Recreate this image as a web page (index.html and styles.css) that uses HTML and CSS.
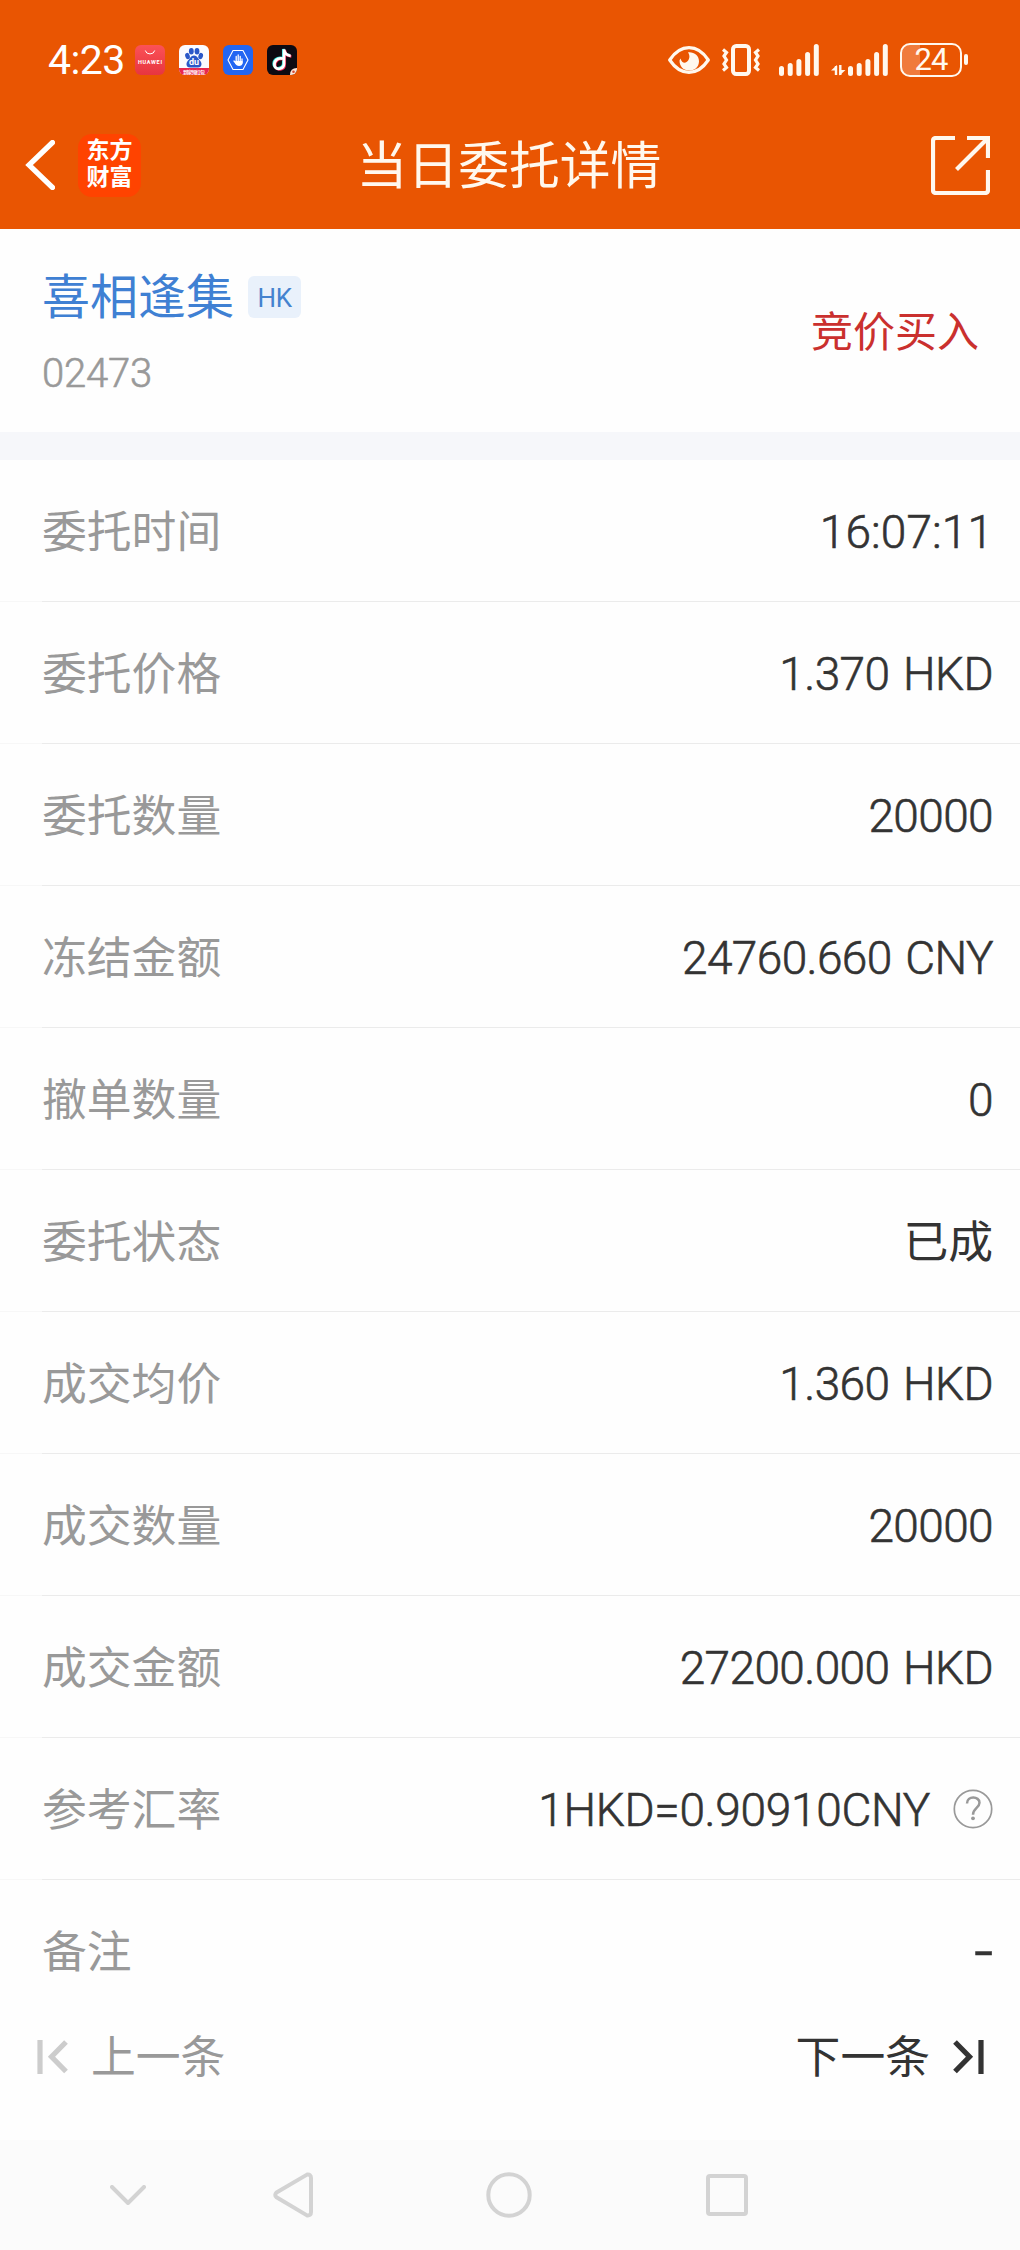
FILE: index.html
```html
<!DOCTYPE html>
<html lang="zh-CN">
<head>
<meta charset="utf-8">
<title>当日委托详情</title>
<link rel="stylesheet" href="styles.css">
</head>
<body>
<header class="header">
  <div class="status">
    <div class="status-left">
      <span class="clock">4:23</span>
      <svg class="app" viewBox="0 0 30 30"><defs><linearGradient id="hw" x1="0" y1="0" x2="0" y2="1"><stop offset="0" stop-color="#fb5257"/><stop offset="1" stop-color="#e73540"/></linearGradient></defs><rect width="30" height="30" rx="6" fill="url(#hw)"/><path d="M10.300 5.500a4.800 4.300 0 0 0 9.400 0" fill="none" stroke="#fff" stroke-width="1"/><text x="15" y="19.200" text-anchor="middle" textLength="24" class="hw-text">HUAWEI</text></svg>
      <svg class="app" viewBox="0 0 30 30"><defs><clipPath id="bd"><rect width="30" height="30" rx="6"/></clipPath></defs><g clip-path="url(#bd)"><rect width="30" height="30" fill="#fbfbff"/><g fill="#2b57c8"><ellipse cx="8.500" cy="11" rx="2.300" ry="3.200" transform="rotate(-15 8.500 11)"/><ellipse cx="12.300" cy="6.300" rx="2.400" ry="3.200"/><ellipse cx="18" cy="6.300" rx="2.400" ry="3.200"/><ellipse cx="21.700" cy="11" rx="2.300" ry="3.200" transform="rotate(15 21.700 11)"/><path d="M15 10.500c3 0 4 3 6 5s2.500 7-2 7H11c-4.500 0-4-5-2-7s3-5 6-5z"/></g><text x="15" y="20.300" text-anchor="middle" class="du-text">du</text><rect y="23" width="30" height="7" fill="#e8284f"/><text x="15" y="28.600" text-anchor="middle" textLength="22" class="bd-text">到家领红包</text></g></svg>
      <svg class="app" viewBox="0 0 30 30"><rect width="30" height="30" rx="6" fill="#2266f2"/><path d="M10 5.500h10l5 9.500-5 9.500H10L5 15z" fill="none" stroke="#fff" stroke-width="1.100" stroke-linejoin="round"/><g stroke="#fff" stroke-width="1.300" stroke-linecap="round"><path d="M13.200 11.500v6M15.200 10v7M17.200 11.500v6M11 16l2.500 3M19 14v4"/></g><path d="M12.500 16h7v2c0 2-1.500 3-3.500 3s-3-1-4-3z" fill="#fff"/></svg>
      <svg class="app" viewBox="0 0 30 30"><rect width="30" height="30" rx="6" fill="#0d0a12"/><g fill="none" stroke-width="2.700"><path d="M15 13c-5-1-9 2-8.200 7 1.200 5 9.500 4 9.500-2V4c.5 4 3 6 6.200 6.200" stroke="#2be5df"/><path d="M16.400 14.200c-5-1-9 2-8.200 7 1.200 5 9.500 4 9.500-2V5c.5 4 3 6 6.700 6.500" stroke="#f52c59"/><path d="M15.700 13.600c-5-1-9 2-8.200 7 1.200 5 9.500 4 9.500-2V4.300c.5 4 3 6 6.700 6.500" stroke="#fff"/></g><path d="M30 23v1a6 6 0 0 1-6 6h-1q0-7 7-7z" fill="#ffe5d8"/><circle cx="26.500" cy="26.700" r="1.300" fill="#d44a35"/></svg>
    </div>
    <div class="status-right">
      <svg width="42" height="28" viewBox="0 0 42 28"><path d="M1.700 14C7 6 13 1.700 21 1.700S35 6 40.300 14C35 22 29 26.300 21 26.300S7 22 1.700 14z" fill="none" stroke="#fff8ee" stroke-width="3.200" stroke-linejoin="round"/><path d="M20 6.200c6-.6 11 3 11 9 0 6-4.500 9.300-10 9.300s-9.500-4-9.500-10l1-2c1 4 4 5 6 3.500 3-2 4-6 1.500-9.800z" fill="#fff8ee"/></svg>
      <svg class="vibrate" width="38" height="32" viewBox="0 0 38 32"><g fill="none" stroke="#fff8ee" stroke-width="4"><rect x="11" y="2" width="16" height="28" rx="3.200"/><path stroke-width="3.200" d="M1 5.500l3.500 3-2.500 3.500 2.500 4-2.500 4 2.500 3.500L1 26.500M37 5.500l-3.500 3 2.500 3.500-2.500 4 2.500 4-2.500 3.500 3.500 3"/></g></svg>
      <svg class="signal" width="40" height="32" viewBox="0 0 40 32"><path d="M2.500 24.500v5M11.200 21.500v8M19.900 17.500v12M28.600 10.500v19M37.300 2.500v27" stroke="#fff8ee" stroke-width="5" stroke-linecap="round"/></svg>
      <svg class="signal-data" width="57" height="32" viewBox="0 0 57 32"><path d="M19.500 24.500v5M28.200 21.500v8M36.900 17.500v12M45.600 10.500v19M54.300 2.500v27" stroke="#fff8ee" stroke-width="5" stroke-linecap="round"/><path d="M5 31V22M9.300 21V31" stroke="#fff8ee" stroke-width="2.400"/><path d="M0 26.500L6 21v5.500zM14.500 26L8.500 31.500V26z" fill="#fff8ee"/></svg>
      <div class="battery"><span class="battery-text">24</span></div><i class="battery-tip"></i>
    </div>
  </div>
  <div class="nav">
    <div class="nav-left">
      <svg width="30" height="50" viewBox="0 0 30 50"><path d="M27.500 2.500L4 25l23.500 22.500" fill="none" stroke="#fff" stroke-width="5.200" stroke-linecap="round"/></svg>
      <div class="logo"><span>东方</span><span>财富</span></div>
    </div>
    <h1 class="title">当日委托详情</h1>
    <svg class="share" width="59" height="59" viewBox="0 0 59 59"><path d="M24 2H5Q2 2 2 5V54Q2 57 5 57H54Q57 57 57 54V34M36 2H57V22M56 3L25.500 33.500" fill="none" stroke="#fff8ee" stroke-width="4.200"/></svg>
  </div>
</header>
<section class="stock">
  <div>
    <div class="stock-name"><span class="name">喜相逢集</span><span class="badge">HK</span></div>
    <div class="code">02473</div>
  </div>
  <div class="side">竞价买入</div>
</section>
<dl class="details">
  <div class="row"><dt>委托时间</dt><dd class="time">16:07:11</dd></div>
  <div class="row"><dt>委托价格</dt><dd>1.370 HKD</dd></div>
  <div class="row"><dt>委托数量</dt><dd>20000</dd></div>
  <div class="row"><dt>冻结金额</dt><dd>24760.660 CNY</dd></div>
  <div class="row"><dt>撤单数量</dt><dd>0</dd></div>
  <div class="row"><dt>委托状态</dt><dd class="cjk">已成</dd></div>
  <div class="row"><dt>成交均价</dt><dd>1.360 HKD</dd></div>
  <div class="row"><dt>成交数量</dt><dd>20000</dd></div>
  <div class="row"><dt>成交金额</dt><dd>27200.000 HKD</dd></div>
  <div class="row"><dt>参考汇率</dt><dd class="rate">1HKD=0.90910CNY<svg width="40" height="40" viewBox="0 0 40 40"><circle cx="20" cy="20" r="18.700" fill="none" stroke="#999" stroke-width="1.700"/><path d="M14 14.500c0-8 12.500-7.500 12.500-.8 0 5-6.500 5.500-6.500 12" fill="none" stroke="#999" stroke-width="2.500"/><circle cx="20" cy="29.300" r="1.900" fill="#999"/></svg></dd></div>
  <div class="row"><dt>备注</dt><dd class="empty">-</dd></div>
</dl>
<nav class="pager">
  <div class="prev"><svg width="32" height="34" viewBox="0 0 32 34"><path d="M3 0v34M29 2L14.500 16.700 29 31.500" fill="none" stroke="#ccc" stroke-width="5.200"/></svg><span>上一条</span></div>
  <div class="next"><span>下一条</span><svg width="32" height="34" viewBox="0 0 32 34"><path d="M29 0v34M3 2l14.500 14.700L3 31.500" fill="none" stroke="#333" stroke-width="5.200"/></svg></div>
</nav>
<footer class="system">
  <svg width="36" height="20" viewBox="0 0 36 20"><path d="M2 2l16 16L34 2"/></svg>
  <svg width="40" height="46" viewBox="0 0 40 46"><path d="M34 2.600L3.500 20.500Q1 23 3.500 25.300L34 43.400Q38 44 38 40V6Q38 2 34 2.600z"/></svg>
  <svg width="46" height="46" viewBox="0 0 46 46"><circle cx="23" cy="23" r="20.700"/></svg>
  <svg width="42" height="42" viewBox="0 0 42 42"><rect x="2" y="2" width="38" height="38" rx="2"/></svg>
</footer>
</body>
</html>
```
FILE: styles.css
```css
* { box-sizing: border-box; }
body {
  margin: 0;
  width: 1020px;
  height: 2250px;
  background: #fefefe;
  color: #333;
  font-family: Roboto, "Noto Sans CJK SC", sans-serif;
}
svg { display: block; flex: none; }
.header { height: 229px; background: #e95502; color: #fff8ee; }
.status {
  height: 119px;
  display: flex;
  justify-content: space-between;
  align-items: center;
  padding: 0 52px 0 48px;
}
.status-left { display: flex; align-items: center; gap: 14px; }
.clock { width: 73px; font-size: 41px; line-height: 48px; letter-spacing: -0.6px; white-space: nowrap; font-weight: 400; color: #fff; }
.app { width: 30px; height: 30px; }
.hw-text { font: 700 5.500px Roboto, sans-serif; fill: #fff; }
.du-text { font: 700 9px Roboto, sans-serif; fill: #fff; }
.bd-text { font: 700 5px "Noto Sans CJK SC", sans-serif; fill: #fff; }
.status-right { display: flex; align-items: center; }
.vibrate { margin-left: 12px; }
.signal { margin-left: 19px; }
.signal-data { margin-left: 12px; }
.battery {
  width: 62px;
  height: 34px;
  margin-left: 12px;
  border: 2px solid #fff8ee;
  border-radius: 10px;
  background: linear-gradient(90deg, #f07b3c 18px, transparent 18px);
  display: flex;
  align-items: center;
  justify-content: center;
}
.battery-text { font-size: 31px; line-height: 30px; letter-spacing: -1px; font-weight: 400; }
.battery-tip { width: 4px; height: 11px; margin-left: 2px; border-radius: 2px; background: #fff8ee; }
.nav {
  height: 92px;
  display: grid;
  grid-template-columns: 1fr auto 1fr;
  align-items: center;
  padding: 0 30px 0 25px;
}
.nav-left { display: flex; align-items: center; gap: 23px; }
.logo {
  width: 63px;
  height: 63px;
  border-radius: 14px;
  background: #ff4300;
  color: #fff;
  display: flex;
  flex-direction: column;
  align-items: center;
  justify-content: center;
  font-size: 23px;
  line-height: 27px;
  padding-bottom: 2px;
  font-weight: 700;
}
.title { margin: 0; padding: 4px 0 0 3px; font-size: 50.800px; line-height: 70px; font-weight: 400; }
.share { justify-self: end; }
.stock {
  height: 231px;
  display: flex;
  justify-content: space-between;
  border-bottom: 28px solid #f6f7fa;
  padding: 33px 41px 0 42px;
}
.stock-name { display: flex; align-items: center; gap: 14px; height: 72px; }
.name { font-size: 48px; line-height: 72px; color: #3f80d3; }
.badge {
  width: 53px;
  height: 42px;
  margin-bottom: 3px;
  border-radius: 6px;
  background: #e9f1fb;
  color: #4483cf;
  font-size: 26px;
  line-height: 45px;
  letter-spacing: -0.5px;
  text-align: center;
}
.code { margin-top: 16px; font-size: 40px; line-height: 48px; letter-spacing: -0.2px; color: #999; font-weight: 300; -webkit-text-stroke: 0.6px; }
.side { font-size: 42px; line-height: 142px; color: #ca302e; }
.details { margin: 0; }
.row {
  height: 142px;
  padding: 3px 27px 1px 42px;
  display: flex;
  justify-content: space-between;
  align-items: center;
  background: linear-gradient(90deg, #f7f7f7 42px, #ebebeb 42px) bottom / 100% 1px no-repeat;
}
.row:last-child { background: none; }
dt { padding-top: 1px; font-size: 44.800px; line-height: 66px; color: #999; }
dd { margin: 0; font-size: 46px; line-height: 66px; letter-spacing: -0.6px; word-spacing: 3px; font-weight: 300; -webkit-text-stroke: 0.6px; }
.time { letter-spacing: 0.1px; }
.cjk { padding-top: 2px; font-size: 44.800px; font-weight: 400; letter-spacing: 0; -webkit-text-stroke: 0; }
.empty { font-size: 68px; }
.rate { display: flex; align-items: center; gap: 23px; letter-spacing: -0.3px; }
.rate svg { margin-top: -2px; }
.pager {
  height: 118px;
  padding: 3px 36px 0 37px;
  display: flex;
  justify-content: space-between;
  align-items: flex-start;
  font-size: 44.800px;
  line-height: 66px;
}
.prev, .next { display: flex; align-items: center; gap: 22px; }
.prev { color: #999; }
.pager svg { margin-top: -3px; }
.system {
  height: 110px;
  background: #fbfbfb;
  display: flex;
  align-items: center;
  padding-left: 110px;
}
.system svg { fill: none; stroke: #d3d3d3; stroke-width: 4; stroke-linecap: round; stroke-linejoin: round; }
.system svg:nth-child(2) { margin-left: 127px; }
.system svg:nth-child(3) { margin-left: 173px; }
.system svg:nth-child(4) { margin-left: 174px; }
```
